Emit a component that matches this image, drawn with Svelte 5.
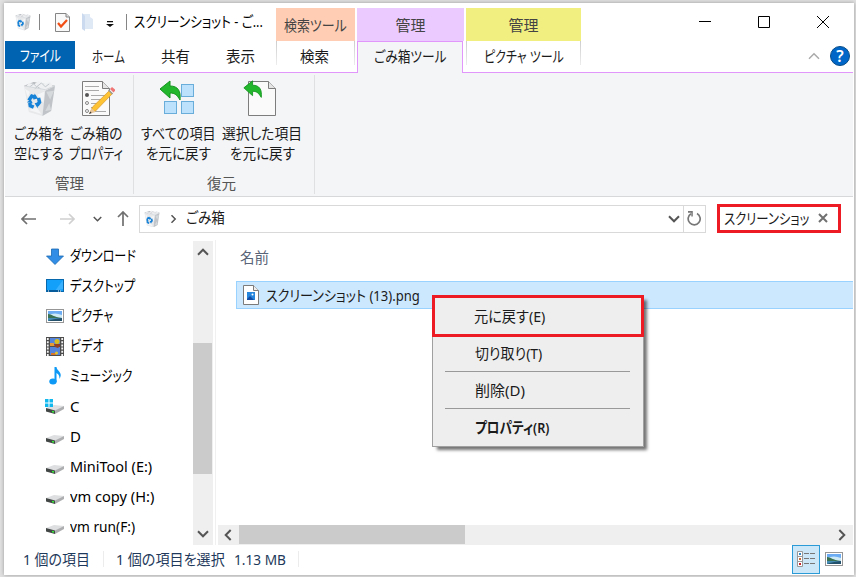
<script lang="ts">
	type NavItem = { name: string; width: number; icon: string };

	const navItems: NavItem[] = [
		{ name: 'ダウンロード', width: 66, icon: 'download' },
		{ name: 'デスクトップ', width: 65, icon: 'desktop' },
		{ name: 'ピクチャ', width: 43, icon: 'picture' },
		{ name: 'ビデオ', width: 34, icon: 'video' },
		{ name: 'ミュージック', width: 62, icon: 'music' },
		{ name: 'C', width: 9, icon: 'system' },
		{ name: 'D', width: 11, icon: 'drive' },
		{ name: 'MiniTool (E:)', width: 82, icon: 'drive' },
		{ name: 'vm copy (H:)', width: 84, icon: 'drive' },
		{ name: 'vm run(F:)', width: 65, icon: 'drive' }
	];

	const menuItems = [
		{ name: '元に戻す(E)', width: 71, kind: 'marked' },
		{ name: '切り取り(T)', width: 67, kind: 'line' },
		{ name: '削除(D)', width: 50, kind: 'line' },
		{ name: 'プロパティ(R)', width: 74, kind: 'bold' }
	];

	// Condense a label to the width the UI font would give it
	function fit(node: HTMLElement, width: number) {
		node.style.transform = `scaleX(${width / node.offsetWidth})`;
	}
</script>

{#snippet label(text: string, width: number)}
	<span class="label" style="width: {width}px"><span class="glyphs" use:fit={width}>{text}</span></span>
{/snippet}

{#snippet bin(size: number)}
	<svg width={size} height={size * 1.12} viewBox="0 0 34 38">
		<path d="M1 6 23 10 20 37 6 33Z" fill="#e6e8ea" />
		<path d="M23 10 33 6 29 32 20 37Z" fill="#c0c4c8" />
		<path d="M1 6 11 2 33 6 23 10Z" fill="#b4b8bc" />
		<path d="M3 7 6 3 12 4 16 1 22 4 28 2 31 7 23 11Z" fill="#eef0f2" />
		<path d="m7 7 4-3 3 3 5-4 4 4 4-3M12 9l3-2 3 2" fill="none" stroke="#c2c6ca" />
		<path d="m2 9 5 3-2 6ZM22 12l-7 3 6 9ZM6 31l8-3 5 7Z" fill="#f4f5f6" />
		<path d="m24 12 4 8 4-9ZM23 32l4-8 2 7Z" fill="#d6d9dc" />
		<path d="m1 6 22 4 10-4" fill="none" stroke="#d4d7da" />
		<path d="M6 21 9 16.500 13 18M16 18.500 17 23 14.500 26M11 28 7.500 26.500 7 23.500" fill="none" stroke="#1581d7" stroke-width="3.600" />
		<path d="m12 14 3.500 5-5 1ZM12 24l4-1-1 6ZM4 23l4-3 2 4Z" fill="#1581d7" />
	</svg>
{/snippet}

{#snippet undoArrow()}
	<path d="M1 9 11 1v5c8 0 11 5 10 14-3-5-5-7-10-7v5Z" fill="#22b72c" stroke="#159420" />
{/snippet}

{#snippet landscape()}
	<svg width="18" height="14" viewBox="0 0 18 14">
		<rect x=".5" y=".5" width="17" height="13" fill="#fff" stroke="#969696" />
		<path d="M2 2h14v10H2z" fill="#6cacf2" />
		<path d="M2 6q7-3 14 0v3H2z" fill="#cce9f5" />
		<path d="M2 5c4 0 5 3 14 4H2z" fill="#3a7251" />
		<path d="M2 9h14v3H2z" fill="#448cb4" />
		<path d="M2 12q5-2 14-3v3z" fill="#23506b" />
	</svg>
{/snippet}

{#snippet chevron(dir: string)}
	<svg class="chevron {dir}" width="12" height="8" viewBox="0 0 12 8">
		<path d="m1 1.3 5 5 5-5" />
	</svg>
{/snippet}

<div class="desktop">
	<div class="window">
		<header class="top">
			<div class="title-left">
				<div class="titlebar">
					<span class="app-bin">{@render bin(16)}</span>
					<i class="rule"></i>
					<svg class="check" width="15" height="19" viewBox="0 0 15 19">
						<path d="M.5.5H11L14.500 4v14.500H.500Z" fill="#f9f9f9" stroke="#858585" />
						<path d="M11 .5V4h3.500" fill="#ddd" stroke="#858585" />
						<path d="m3 10 3 3.500L12 7" fill="none" stroke="#f04e14" stroke-width="2.200" />
					</svg>
					<svg class="folder" width="12" height="18" viewBox="0 0 12 18">
						<path d="M0 1h8v3l3 2v10H0Z" fill="#dfe8f5" />
						<path d="M0 0 3 3v15l-3-2Z" fill="#cbdaee" />
					</svg>
					<svg class="more" width="8" height="6" viewBox="0 0 8 6">
						<path d="M1 0h6v1.300H1zM0 3h8L4 6Z" fill="#111" />
					</svg>
					<i class="rule"></i>
					<span class="title">{@render label('スクリーンショット - ご...', 129)}</span>
				</div>
				<nav class="tabs">
					<span class="tab file">{@render label('ファイル', 41)}</span>
					<span class="tab home">{@render label('ホーム', 33)}</span>
					<span class="tab share">{@render label('共有', 29)}</span>
					<span class="tab view">{@render label('表示', 29)}</span>
				</nav>
			</div>
			<div class="tool search-tool">
				<div class="tool-head">{@render label('検索ツール', 63)}</div>
				<div class="tool-tab">{@render label('検索', 29)}</div>
			</div>
			<div class="tool bin-tool">
				<div class="tool-head">{@render label('管理', 30)}</div>
				<div class="tool-tab">{@render label('ごみ箱ツール', 73)}</div>
			</div>
			<div class="tool picture-tool">
				<div class="tool-head">{@render label('管理', 30)}</div>
				<div class="tool-tab">{@render label('ピクチャ ツール', 80)}</div>
			</div>
			<div class="title-right">
				<div class="captions">
					<svg width="12" height="12"><path d="M0 5.500h12" /></svg>
					<svg width="12" height="12"><path d="M.5.5h11v11H.500z" /></svg>
					<svg width="12" height="12"><path d="m0 0 12 12M12 0 0 12" /></svg>
				</div>
				<div class="help-row">
					{@render chevron('up pale')}
					<span class="help">?</span>
				</div>
			</div>
		</header>

		<section class="ribbon">
			<div class="group manage">
				<div class="commands">
					<div class="command">
						<span class="pic">{@render bin(33)}</span>
						{@render label('ごみ箱を', 50)}
						{@render label('空にする', 50)}
					</div>
					<div class="command props">
						<span class="pic">
							<svg width="34" height="37" viewBox="0 0 34 37">
								<path d="M1.500 1.500h20l7 7v27h-27Z" fill="#fafafa" stroke="#7d7d7d" />
								<path d="M21.500 1.500v7h7" fill="#e5e5e5" stroke="#7d7d7d" />
								<path d="M4 6.500h14M4 10.500h14M10 15.500h14M10 19.500h12M10 23.500h9M10 27.500h7M14 31.500h11" stroke="#aaa" />
								<circle cx="6" cy="15" r="2" fill="#555" />
								<circle cx="6" cy="23" r="1.500" fill="none" stroke="#888" />
								<circle cx="6" cy="31" r="1.500" fill="none" stroke="#888" />
								<path d="m9.500 32 2-5L28.500 10.500l3 3L14.500 31Z" fill="#fdc334" stroke="#d89727" stroke-width=".7" />
								<path d="m8 34 2.500-6 4 4Z" fill="#e8c69b" />
								<path d="m8 34 1.200-2.500 1.500 1.500Z" fill="#333" />
								<path d="m29 9 3.500 3.500 2-2.500-3.500-3Z" fill="#ef7474" />
								<path d="m27.500 10 4 4" stroke="#999" stroke-width="1.500" />
							</svg>
						</span>
						{@render label('ごみ箱の', 52)}
						{@render label('プロパティ', 54)}
					</div>
				</div>
				<div class="caption">{@render label('管理', 29)}</div>
			</div>
			<div class="group restore">
				<div class="commands">
					<div class="command all">
						<span class="pic">
							<svg width="36" height="37" viewBox="0 0 36 37">
								<g fill="#bce1fc" stroke="#69aedb">
									<rect x="22.500" y="4.500" width="12" height="12" />
									<rect x="5.500" y="21.500" width="12" height="12" />
									<rect x="22.500" y="21.500" width="12" height="12" />
								</g>
								{@render undoArrow()}
							</svg>
						</span>
						{@render label('すべての項目', 75)}
						{@render label('を元に戻す', 65)}
					</div>
					<div class="command selected">
						<span class="pic">
							<svg width="34" height="38" viewBox="0 0 34 38">
								<path d="M5.500 1.500h20l7 7v27h-27Z" fill="#fafafa" stroke="#7d7d7d" />
								<path d="M25.500 1.500v7h7" fill="#e5e5e5" stroke="#7d7d7d" />
								<g transform="scale(.87)">{@render undoArrow()}</g>
							</svg>
						</span>
						{@render label('選択した項目', 80)}
						{@render label('を元に戻す', 65)}
					</div>
				</div>
				<div class="caption">{@render label('復元', 29)}</div>
			</div>
		</section>

		<section class="location">
			<svg class="arrow" width="16" height="12" viewBox="0 0 16 12"><path d="M6 1 1 6l5 5M1 6h14" /></svg>
			<svg class="arrow forward" width="16" height="12" viewBox="0 0 16 12"><path d="m10 1 5 5-5 5M15 6H1" /></svg>
			<span class="recent">{@render chevron('small')}</span>
			<svg class="arrow up-level" width="12" height="16" viewBox="0 0 12 16"><path d="m1 6 5-5 5 5M6 1v14" /></svg>
			<div class="address">
				<span class="address-bin">{@render bin(16)}</span>
				<span class="crumb">{@render chevron('right small')}</span>
				<span class="place">{@render label('ごみ箱', 39)}</span>
				<span class="history">{@render chevron('')}</span>
				<span class="refresh">
					<svg width="15" height="15" viewBox="0 0 15 15">
						<path d="M10 2.500A6 6 0 1 1 4 2.700" fill="none" stroke="#777" stroke-width="1.700" />
						<path d="M5.800 0v5.500H4.300V1.700H1V0Z" fill="#777" />
					</svg>
				</span>
			</div>
			<div class="search">
				{@render label('スクリーンショッ', 85)}
				<svg width="10" height="10" viewBox="0 0 10 10"><path d="m1 1 8 8M9 1 1 9" stroke="#707070" stroke-width="2" /></svg>
			</div>
		</section>

		<main class="content">
			<aside class="nav">
				<div class="nav-list">
					{#each navItems as item}
						<div class="nav-item">
							<span class="nav-icon">
								{#if item.icon === 'download'}
									<svg width="18" height="17"><path d="M5.500 1h7v7h5L9 16.500.500 8h5Z" fill="#318de5" stroke="#1b69b4" stroke-width=".8" /></svg>
								{:else if item.icon === 'desktop'}
									<svg width="18" height="14"><rect x=".5" y=".5" width="17" height="12" fill="#13a0fb" stroke="#0868ae" /><path d="M17 1v9L9 12Z" fill="#39b1ff" /><path d="M1 12h14" stroke="#065b9a" stroke-width="2" /><path d="M2 12h1M12 12h1M14 12h1" stroke="#fff" /></svg>
								{:else if item.icon === 'picture'}
									{@render landscape()}
								{:else if item.icon === 'video'}
									<svg width="18" height="19" viewBox="0 0 18 19">
										<path d="M0 0h18v19H0z" fill="#4c4c4c" />
										<path d="M1.800 1v18M16.200 1v18" stroke="#f4f4f4" stroke-width="1.800" stroke-dasharray="2 1.200" />
										<path d="M4 1h10v8H4zM4 10h10v8H4z" fill="#5584dc" />
										<path d="M4 6h4v3H4z" fill="#e69a35" />
										<circle cx="11" cy="4.500" r="2.500" fill="#d8bd20" />
										<path d="M8 7h6v2l-2 2-3-1z" fill="#973f23" />
										<path d="M5 16h5v2H5z" fill="#d5762a" />
										<circle cx="10.500" cy="16" r="1.500" fill="#e2c529" />
									</svg>
								{:else if item.icon === 'music'}
									<svg width="12" height="18" viewBox="0 0 12 18"><ellipse cx="4" cy="14.500" rx="3.700" ry="3" fill="#0d99f5" /><path d="M5.500 0h2c0 4 7 5 3 12 0-5-2-5-3-6v9h-2Z" fill="#0d99f5" /></svg>
								{:else}
									<svg class="drive" width="20" height="16" viewBox="0 0 20 16">
										<path d="m1 10 8-3 10 1-9 5Z" fill="#dedfe1" />
										<path d="m10 12.500 9-4.500v3l-9 5Z" fill="#acaeb0" />
										<path d="m1 10 9 2.500V16l-9-2.500Z" fill="#424745" />
										<path d="M7 13.500 9 14" stroke="#38ec3b" stroke-width="1.300" />
										{#if item.icon === 'system'}
											<path d="M0 1h3.500v3.500H0zM4.500 1H8v3.500H4.500zM0 5.500h3.500V9H0zM4.500 5.500H8V9H4.500z" fill="#10b8ee" />
										{/if}
									</svg>
								{/if}
							</span>
							{@render label(item.name, item.width)}
						</div>
					{/each}
				</div>
				<div class="vscroll">
					{@render chevron('up')}
					<i class="vthumb"></i>
					{@render chevron('')}
				</div>
			</aside>
			<section class="files">
				<div class="column">{@render label('名前', 29)}</div>
				<div class="file-row">
					<svg width="16" height="20" viewBox="0 0 16 20">
						<path d="M.500.500h10l5 5v14H.500Z" fill="#fff" stroke="#7b7b7b" />
						<path d="M10.500.500v5h5" fill="#eee" stroke="#7b7b7b" />
						<path d="M4 7h8v8H4z" fill="#2686de" />
						<path d="m4 14 3-3 4 4H4z" fill="#124ba4" />
						<circle cx="9.500" cy="9.500" r="1" fill="#fff" />
					</svg>
					{@render label('スクリーンショット (13).png', 154)}
				</div>
				<div class="hscroll">
					{@render chevron('left')}
					<i class="hthumb"></i>
					{@render chevron('right')}
				</div>
			</section>
		</main>

		<footer class="status">
			<span class="count">{@render label('1 個の項目', 67)}</span>
			<span class="picked">{@render label('1 個の項目を選択', 109)}{@render label('1.13 MB', 52)}</span>
			<div class="views">
				<span class="details">
					<svg width="18" height="17" viewBox="0 0 18 17">
						<path d="M.500.500h5v15H.500zM.500 5.500h5M.500 10.500h5" fill="#fff" stroke="#999" />
						<path d="M2 2h2v2H2z" fill="#3489c4" />
						<path d="M2 7h2v2H2z" fill="#c76a35" />
						<path d="M2 12h2v2H2z" fill="#c6232a" />
						<path d="M7 2.500h5M13 2.500h5M7 7.500h5M13 7.500h5M7 12.500h5M13 12.500h5" stroke="#777" />
					</svg>
				</span>
				<span class="thumbs">{@render landscape()}</span>
			</div>
		</footer>
	</div>

	<div class="menu">
		{#each menuItems as item}
			<div class="menu-item {item.kind}">{@render label(item.name, item.width)}</div>
		{/each}
	</div>
</div>

<style>
	:global(body) {
		margin: 0;
		background: #dcdcdc;
	}
	.desktop {
		position: relative;
		box-sizing: border-box;
		width: 856px;
		height: 577px;
		padding: 3px 2px 2px 4px;
		overflow: hidden;
		background: #e1e1e1;
		font: 15px/20px "Noto Sans", "Noto Sans CJK JP", sans-serif;
		font-feature-settings: "palt";
		color: #1b1b1b;
	}
	.desktop svg {
		display: block;
		flex: none;
	}
	.window {
		box-sizing: border-box;
		display: flex;
		flex-direction: column;
		height: 572px;
		padding: 0 1px;
		background: #fff;
		box-shadow: 0 0 4px #999;
	}
	.label {
		display: block;
		flex: none;
		height: 20px;
		white-space: nowrap;
	}
	.glyphs {
		display: inline-block;
		line-height: 20px;
		transform-origin: 0 50%;
	}

	/* title bar and tabs */
	.top {
		display: flex;
		flex: none;
		height: 70px;
		box-sizing: border-box;
		background: linear-gradient(#e196fb, #e196fb) 0 69px / 100% 1px no-repeat;
	}
	.title-left {
		width: 271px;
	}
	.titlebar {
		display: flex;
		align-items: center;
		height: 38px;
	}
	.app-bin {
		margin-left: 10px;
	}
	.rule {
		width: 1px;
		height: 16px;
		margin-left: 8px;
		background: #858585;
	}
	.check {
		margin-left: 15px;
	}
	.folder {
		margin-left: 12px;
	}
	.more {
		margin: 4px 4px 0 12px;
	}
	.title {
		margin: -2px 0 0 7px;
		color: #000;
	}
	.tabs {
		display: flex;
		align-items: center;
		height: 28px;
	}
	.tab {
		margin-top: 1px;
	}
	.file {
		display: flex;
		align-items: center;
		justify-content: center;
		width: 70px;
		height: 28px;
		margin-top: 0;
		background: #0063b1;
		color: #fff;
	}
	.home {
		margin-left: 17px;
	}
	.share,
	.view {
		margin-left: 36px;
	}
	.tool {
		box-sizing: border-box;
		height: 70px;
		padding-top: 5px;
		margin-right: 2px;
	}
	.tool-head {
		display: flex;
		align-items: center;
		justify-content: center;
		height: 33px;
		color: #444;
	}
	.tool-tab {
		display: flex;
		align-items: center;
		justify-content: center;
		box-sizing: border-box;
		height: 24px;
		padding-top: 6px;
		border: solid;
		border-width: 0 1px;
		border-image: linear-gradient(#ccc, #eee) 1;
	}
	.search-tool {
		width: 79px;
	}
	.search-tool .tool-head {
		background: #ffcdb3;
	}
	.search-tool .tool-tab {
		padding-right: 2px;
	}
	.bin-tool {
		width: 107px;
	}
	.bin-tool .tool-head {
		background: #ebcbff;
	}
	.bin-tool .tool-tab {
		width: 106px;
		height: 32px;
		padding: 0 0 3px;
		background: #f4f5f7;
		border: 1px solid #e196fb;
		border-bottom: 0;
	}
	.picture-tool {
		width: 115px;
	}
	.picture-tool .tool-head {
		background: #f0ef80;
	}
	.title-right {
		flex: 1;
	}
	.captions {
		display: flex;
		gap: 47px;
		padding: 13px 24px 0 0;
		justify-content: flex-end;
		fill: none;
		stroke: #000;
	}
	.help-row {
		display: flex;
		justify-content: flex-end;
		align-items: center;
		gap: 10px;
		margin-top: 18px;
		padding-right: 3px;
	}
	.help {
		box-sizing: border-box;
		width: 20px;
		height: 20px;
		border: 1px solid #074c87;
		border-radius: 50%;
		background: #0067c8;
		color: #fff;
		font-size: 16px;
		font-weight: 600;
		line-height: 18px;
		text-align: center;
	}
	.chevron {
		fill: none;
		stroke: #555;
		stroke-width: 2;
	}
	.chevron.pale {
		stroke: #aaa;
		stroke-width: 1.500;
	}
	.chevron.small {
		width: 9px;
		height: 6px;
	}
	.up {
		transform: rotate(180deg);
	}
	.left {
		transform: rotate(90deg);
	}
	.right {
		transform: rotate(-90deg);
	}

	/* ribbon */
	.ribbon {
		display: flex;
		flex: none;
		height: 123px;
		background: #f4f5f7;
		border-bottom: 1px solid #d7d8da;
	}
	.group {
		box-sizing: border-box;
		height: 119px;
		margin-top: 2px;
		border-right: 1px solid #dfe0e2;
	}
	.manage {
		width: 129px;
	}
	.restore {
		width: 181px;
	}
	.commands {
		display: flex;
		height: 98px;
		padding-top: 5px;
		box-sizing: border-box;
	}
	.command {
		display: flex;
		flex-direction: column;
		align-items: center;
	}
	.manage .command {
		margin-left: 9px;
	}
	.manage .props {
		margin-left: 5px;
	}
	.props .pic {
		padding-left: 3px;
	}
	.restore .command {
		margin-left: 7px;
	}
	.all .pic {
		padding-right: 3px;
	}
	.restore .selected {
		margin-left: 6px;
	}
	.selected .pic {
		padding-right: 4px;
	}
	.pic {
		height: 43px;
	}
	.caption {
		display: flex;
		justify-content: center;
		color: #555;
	}
	.restore .caption {
		padding-right: 5px;
	}

	/* address row */
	.location {
		display: flex;
		flex: none;
		align-items: center;
		height: 43px;
	}
	.arrow {
		margin-left: 16px;
		fill: none;
		stroke: #707070;
		stroke-width: 1.700;
	}
	.forward {
		margin-left: 22px;
		stroke: #d0d0d0;
	}
	.recent {
		margin-left: 18px;
	}
	.up-level {
		margin-left: 15px;
	}
	.address {
		display: flex;
		align-items: center;
		box-sizing: border-box;
		width: 567px;
		height: 28px;
		margin-left: 10px;
		border: 1px solid #d9d9d9;
	}
	.address-bin {
		margin-left: 4px;
	}
	.crumb {
		margin-left: 9px;
	}
	.place {
		margin: -3px 0 0 8px;
	}
	.history {
		margin: 0 3px 0 auto;
	}
	.refresh {
		display: flex;
		align-items: center;
		justify-content: center;
		width: 21px;
		height: 26px;
		border-left: 1px solid #d9d9d9;
	}
	.search {
		display: flex;
		align-items: center;
		box-sizing: border-box;
		width: 124px;
		height: 29px;
		margin-left: 11px;
		padding: 0 0 2px 4px;
		border: 3px solid #ed1c24;
	}
	.search svg {
		margin-left: 9px;
	}

	/* panes */
	.content {
		display: flex;
		flex: 1;
		min-height: 0;
	}
	.nav {
		display: flex;
		box-sizing: border-box;
		width: 211px;
		height: 305px;
		border-right: 1px solid #f0f0f0;
	}
	.nav-list {
		width: 188px;
		padding-top: 1px;
		color: #000;
	}
	.nav-item {
		display: flex;
		align-items: center;
		height: 30.1px;
		padding-left: 40px;
	}
	.nav-item .label {
		margin-top: -2px;
	}
	.nav-icon {
		display: flex;
		justify-content: center;
		width: 20px;
		margin-right: 5px;
	}
	.drive {
		margin-top: -1px;
	}
	.vscroll {
		display: flex;
		flex-direction: column;
		align-items: center;
		justify-content: space-between;
		box-sizing: border-box;
		width: 20px;
		height: 304px;
		margin-top: 1px;
		padding: 7px 0;
		background: #efefef;
	}
	.vthumb {
		width: 19px;
		height: 131px;
		margin: 30px 0 0 -1px;
		background: #cbcbcb;
	}
	.files {
		display: flex;
		flex: 1;
		flex-direction: column;
		height: 305px;
	}
	.column {
		padding: 7px 0 0 24px;
		color: #5a6478;
	}
	.file-row {
		display: flex;
		align-items: center;
		gap: 7px;
		box-sizing: border-box;
		height: 28px;
		margin: 14px 0 0 20px;
		padding-left: 6px;
		background: #cce8ff;
		border: 1px solid #99d1ff;
		border-right: 0;
	}
	.file-row svg {
		margin-top: -1px;
	}
	.hscroll {
		display: flex;
		align-items: center;
		height: 20px;
		margin: auto 0 0 2px;
		padding: 0 5px 0 4px;
		background: #efefef;
	}
	.hthumb {
		width: 226px;
		height: 19px;
		margin: 0 auto 1px 5px;
		background: #cbcbcb;
	}

	/* status bar */
	.status {
		display: flex;
		flex: none;
		height: 30px;
		color: #1e395b;
	}
	.count,
	.picked {
		display: flex;
		align-items: center;
		box-sizing: border-box;
		height: 16px;
		margin-top: 6px;
		border-right: 1px solid #ececec;
	}
	.status .label {
		margin-top: -1px;
	}
	.count {
		padding: 0 13px 0 18px;
	}
	.picked {
		gap: 9px;
		padding: 0 12px;
	}
	.views {
		display: flex;
		margin-left: auto;
		padding-right: 10px;
	}
	.details {
		display: flex;
		align-items: center;
		justify-content: center;
		box-sizing: border-box;
		width: 28px;
		height: 29px;
		margin-right: 5px;
		background: #cce8f8;
		border: 1px solid #2a9bd6;
	}
	.thumbs {
		padding-top: 7px;
	}

	/* context menu floats over the file list */
	.menu {
		position: absolute;
		left: 432px;
		top: 295px;
		box-sizing: border-box;
		width: 212px;
		height: 152px;
		background: #eee;
		border: 1px solid #a0a0a0;
		box-shadow: 4px 4px 3px -1px rgba(0, 0, 0, 0.55);
	}
	.menu-item {
		display: flex;
		align-items: center;
		box-sizing: border-box;
		height: 37px;
		margin: 0 13px 0 12px;
		padding: 0 0 1px 30px;
	}
	.marked {
		width: 212px;
		height: 42px;
		margin: -1px 0 -2px -1px;
		padding-left: 39px;
		border: 3px solid #ed1c24;
	}
	.line {
		border-bottom: 1px solid #999;
	}
	.bold {
		font-weight: 600;
	}
</style>
